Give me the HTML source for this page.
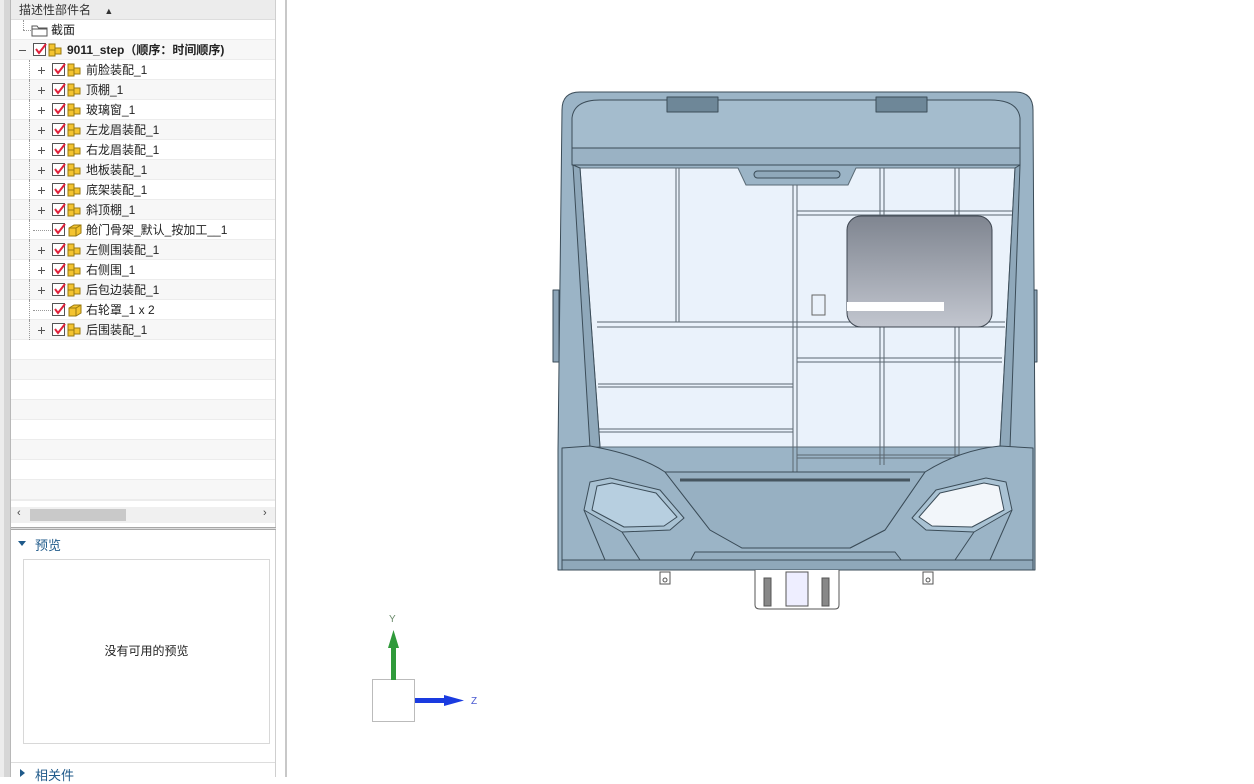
<!DOCTYPE html>
<html><head><meta charset="utf-8"><style>
*{margin:0;padding:0;box-sizing:border-box}
body{width:1254px;height:777px;overflow:hidden;background:#fff;position:relative;font-family:"Liberation Sans","Noto Sans CJK SC",sans-serif;font-size:12px;color:#222}
.strip{position:absolute;left:0;top:0;width:11px;height:777px;background:#d6d6d6;border-right:1px solid #b8b8b8}
.strip2{position:absolute;left:0;top:0;width:4px;height:777px;background:#ececec}
.panel{position:absolute;left:11px;top:0;width:265px;height:777px;background:#fff;border-right:1px solid #cfcfcf}
.hdr{position:absolute;left:0;top:0;width:264px;height:20px;background:#ececec;border-bottom:1px solid #ddd;padding-left:8px;line-height:20px;font-size:12px;color:#333}
.row{position:absolute;left:0;width:264px;height:20px;border-bottom:1px solid #ececec;line-height:20px;white-space:nowrap}
.row.alt{background:#f7f7f7}
.row span{position:absolute;top:0}
.plus{position:absolute;width:7px;height:7px;top:7px}
.plus:before{content:"";position:absolute;left:0;top:3px;width:7px;height:1px;background:#555}
.plus.p:after{content:"";position:absolute;left:3px;top:0;width:1px;height:7px;background:#555}
.dot{position:absolute;border-top:1px dotted #999;top:10px;height:0}
.cb{position:absolute;top:3px;width:13px;height:13px;border:1px solid #555;background:#fff}
.cb svg{position:absolute;left:0;top:-1px}
.ic{position:absolute;top:3px}
.div{position:absolute;left:285px;top:0;width:2px;height:777px;background:#c8c8c8}
.sb{position:absolute;left:11px;top:507px;width:264px;height:16px;background:#f0f0f0}
.sep{position:absolute;left:11px;top:527px;width:265px;height:3px;border-top:1px solid #a8a8a8;border-bottom:1px solid #a8a8a8;background:#ddd}
.prev{position:absolute;left:23px;top:559px;width:247px;height:185px;border:1px solid #d8d8d8;text-align:center;line-height:183px;font-size:12px;color:#222}
</style></head><body>
<div class="strip"></div><div class="strip2"></div>
<div class="panel">
<div class="hdr">描述性部件名 <span style="font-size:9px;margin-left:10px">▲</span></div>
<div class="row" style="top:20px"><div class="dot" style="left:12px;width:10px"></div><div style="position:absolute;left:12px;top:0;height:10px;border-left:1px dotted #999"></div>
<svg class="ic" style="left:20px;top:3px" width="18" height="14"><path d="M1 3h5l1.5 2H16v8H1z" fill="#fff" stroke="#555"/><path d="M1 6h15" stroke="#555"/></svg>
<span style="left:40px">截面</span></div>
<div class="row alt" style="top:40px"><div class="plus" style="left:8px"></div>
<div class="cb" style="left:22px"><svg width="13" height="13"><path d="M2 6l3 4 7-9" stroke="#e0203a" stroke-width="2" fill="none"/></svg></div>
<svg class="ic" style="left:36px" width="18" height="15"><rect x="2" y="1" width="6" height="6" fill="#f4c430" stroke="#9a7a10"/><rect x="8" y="5" width="6" height="6" fill="#f4c430" stroke="#9a7a10"/><rect x="2" y="7" width="6" height="6" fill="#f4c430" stroke="#9a7a10"/></svg>
<span style="left:56px;font-weight:bold">9011_step（顺序：时间顺序)</span></div>
</div>
<div id="rows"></div>
<div class="div"></div>
<div class="sb"><span style="position:absolute;left:6px;top:0;font-size:11px;color:#444">‹</span><div style="position:absolute;left:19px;top:2px;width:96px;height:12px;background:#c9c9c9"></div><span style="position:absolute;left:252px;top:0;font-size:11px;color:#444">›</span></div>
<div style="position:absolute;left:11px;top:500px;width:264px;height:1px;background:#ececec"></div>
<div class="sep"></div>
<div style="position:absolute;left:18px;top:541px;width:0;height:0;border-left:4px solid transparent;border-right:4px solid transparent;border-top:5px solid #1f5a8a"></div>
<div style="position:absolute;left:35px;top:535px;font-size:13px;color:#1f5a8a">预览</div>
<div class="prev">没有可用的预览</div>
<div style="position:absolute;left:11px;top:762px;width:264px;height:1px;background:#ddd"></div>
<div style="position:absolute;left:20px;top:769px;width:0;height:0;border-top:4px solid transparent;border-bottom:4px solid transparent;border-left:5px solid #1f5a8a"></div>
<div style="position:absolute;left:35px;top:765px;font-size:13px;color:#1f5a8a">相关件</div>

<svg style="position:absolute;left:0;top:0" width="1254" height="777">
<!-- axis -->
<rect x="372.5" y="679.5" width="42" height="42" fill="#fff" stroke="#bbb"/>
<rect x="391" y="645" width="5" height="35" fill="#2f9a3a"/><path d="M388 648l5.5-18 5.5 18z" fill="#2f9a3a"/>
<rect x="415" y="698" width="32" height="5" fill="#1a3be0"/><path d="M444 695l20 5.5-20 5.5z" fill="#1a3be0"/>
<text x="389" y="622" font-size="10" fill="#6a8a6a" font-family="Liberation Sans">Y</text>
<text x="471" y="704" font-size="10" fill="#4a5ad0" font-family="Liberation Sans">Z</text>
<!-- car -->
<g stroke="#3b4c58" stroke-width="1" stroke-linejoin="round">
<rect x="553" y="290" width="6" height="72" fill="#8da5b8"/><rect x="1031" y="290" width="6" height="72" fill="#8da5b8"/>
<path d="M558 570V450L562 110Q562 92 580 92H1015Q1033 92 1033 110L1035 450V570Z" fill="#9bb4c6"/>
<path d="M572 148V118Q574 100 600 100H990Q1018 100 1020 118V148Z" fill="#a4bccd"/>
<rect x="667" y="97" width="51" height="15" fill="#6e8798"/><rect x="876" y="97" width="51" height="15" fill="#6e8798"/>
<path d="M572 148H1020V165H572Z" fill="#9ab2c4"/>
<path d="M580 168H738L746 185H848L856 168H1015L1000 447H600Z" fill="#eaf2fb" stroke="#5a6a75"/>
<rect x="754" y="171" width="86" height="7" rx="3.5" fill="#8fa8ba"/>
</g>
<g stroke="#5b6770" stroke-width="1" fill="none">
<path d="M676 168V322M679 168V322M793 185V472M797 185V472M880 168V465M884 168V465M955 168V465M959 168V465"/>
<path d="M797 211H1012M797 215H1012M597 322H1005M597 327H1005M797 358H1002M797 362H1002M598 384H793M598 387H793M599 429H793M599 432H793M797 455H1000M797 458H1000"/>
</g>
<defs><linearGradient id="g" x1="0" y1="0" x2="0" y2="1"><stop offset="0" stop-color="#7f8590"/><stop offset="1" stop-color="#c2c6cf"/></linearGradient></defs>
<rect x="847" y="216" width="145" height="111" rx="14" fill="url(#g)" stroke="#3d4550"/>
<rect x="847" y="302" width="97" height="9" fill="#fff"/>
<rect x="812" y="295" width="13" height="20" fill="none" stroke="#666"/>
<!-- left pillar -->
<path d="M573 165L580 168 600 447 590 448Z" fill="#8fa8ba" stroke="#3b4c58"/>
<path d="M1020 165L1015 168 1000 447 1010 448Z" fill="#8fa8ba" stroke="#3b4c58"/>
<!-- lower -->
<g stroke="#3b4c58" stroke-width="1" stroke-linejoin="round">
<path d="M562 448L590 446Q640 455 665 472L710 530 742 548H850L885 530 925 472Q960 450 1000 446L1033 448V560H562Z" fill="#9bb4c6"/>
<path d="M665 472H925L885 530 850 548H742L710 530Z" fill="#97b0c2"/>
<path d="M680 480H910" stroke="#46555f" stroke-width="3"/>
<path d="M695 552H895L905 565H688Z" fill="#95aec0"/>
<path d="M590 482L610 478 660 490 684 518 670 530 622 532 584 510Z" fill="#a9c2d3"/>
<path d="M597 486L612 483 656 493 677 517 664 526 624 527 592 510Z" fill="#b7cfe0"/>
<path d="M1006 482L986 478 936 490 912 518 926 530 974 532 1012 510Z" fill="#a9c2d3"/>
<path d="M999 486L984 483 940 493 919 517 932 526 972 527 1004 510Z" fill="#f2f6fa"/>
<path d="M584 510L605 560M622 532L640 560M1012 510L990 560M974 532L955 560" fill="none"/>
<path d="M562 560H1033V570H562Z" fill="#8fa8ba"/>
</g>
<g stroke="#555" fill="#fff">
<rect x="660" y="572" width="10" height="12"/><circle cx="665" cy="580" r="2"/>
<rect x="923" y="572" width="10" height="12"/><circle cx="928" cy="580" r="2"/>
<path d="M755 570V605Q755 609 760 609H835Q839 609 839 605V570"/>
<rect x="764" y="578" width="7" height="28" fill="#888"/><rect x="822" y="578" width="7" height="28" fill="#888"/>
<rect x="786" y="572" width="22" height="34" fill="#eef"/>
</g>
</svg>
<script>
var items=[["前脸装配_1",1],["顶棚_1",1],["玻璃窗_1",1],["左龙眉装配_1",1],["右龙眉装配_1",1],["地板装配_1",1],["底架装配_1",1],["斜顶棚_1",1],["舱门骨架_默认_按加工__1",0],["左侧围装配_1",1],["右侧围_1",1],["后包边装配_1",1],["右轮罩_1 x 2",0],["后围装配_1",1]];
var h="";
for(var i=0;i<22;i++){var y=60+i*20;var alt=(i%2==1)?" alt":"";
if(i<items.length){var it=items[i];
var ic=it[1]?'<svg class="ic" style="left:55px" width="18" height="15"><rect x="2" y="1" width="6" height="6" fill="#f4c430" stroke="#9a7a10"/><rect x="8" y="5" width="6" height="6" fill="#f4c430" stroke="#9a7a10"/><rect x="2" y="7" width="6" height="6" fill="#f4c430" stroke="#9a7a10"/></svg>':'<svg class="ic" style="left:56px" width="16" height="15"><path d="M2 5l5-3h7v8l-5 3H2z" fill="#f4c430" stroke="#9a7a10"/><path d="M2 5h7l5-3M9 5v8" stroke="#9a7a10" fill="none"/></svg>';
h+='<div class="row'+alt+'" style="top:'+y+'px"><div style="position:absolute;left:18px;top:0;height:20px;border-left:1px dotted #999"></div>'+(it[1]?'<div class="plus p" style="left:27px"></div>':'<div class="dot" style="left:22px;width:18px"></div>')+'<div class="cb" style="left:41px"><svg width="13" height="13"><path d="M2 6l3 4 7-9" stroke="#e0203a" stroke-width="2" fill="none"/></svg></div>'+ic+'<span style="left:75px">'+it[0]+'</span></div>';}
else h+='<div class="row'+alt+'" style="top:'+y+'px"></div>';}
var p=document.querySelector(".panel");p.insertAdjacentHTML("beforeend",h);
</script>
</body></html>
